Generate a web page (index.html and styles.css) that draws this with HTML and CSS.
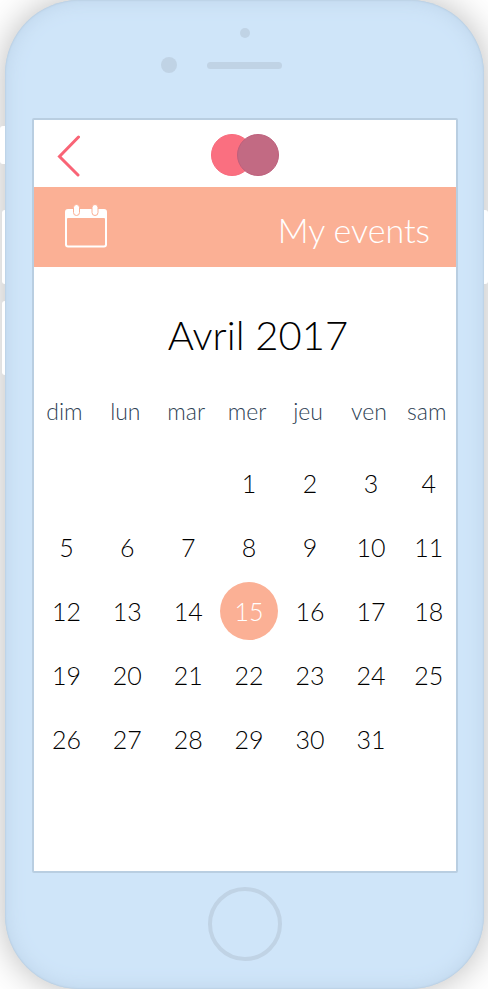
FILE: index.html
```html
<!DOCTYPE html>
<html lang="fr">
<head>
<meta charset="utf-8">
<meta name="viewport" content="width=device-width, initial-scale=1">
<title>My events</title>
<link rel="stylesheet" href="styles.css">
</head>
<body>
<div class="phone">
  <span class="key key-mute"></span>
  <span class="key key-up"></span>
  <span class="key key-down"></span>
  <span class="key key-power"></span>
  <div class="forehead">
    <span class="sensor"></span>
    <div class="ear">
      <span class="camera"></span>
      <span class="speaker"></span>
    </div>
  </div>
  <div class="screen">
    <header class="topbar">
      <a class="back" href="#" aria-label="Back">
        <svg width="24" height="42" viewBox="0 0 24 42" fill="none" stroke="#f96476" stroke-width="3" stroke-linecap="round" stroke-linejoin="miter"><path d="M22.500 2 3.500 21.500 22 40"/></svg>
      </a>
      <svg class="logo" width="70" height="43" viewBox="0 0 70 43">
        <circle cx="22" cy="21" r="20.500" fill="#fa6f80" stroke="#f86a7c"/>
        <circle cx="48" cy="21" r="20.500" fill="#c26a83" stroke="#bd607c"/>
      </svg>
    </header>
    <div class="banner">
      <svg width="44" height="46" viewBox="0 0 44 46">
        <path fill="#fff" fill-rule="evenodd" d="M3 5h36a3 3 0 0 1 3 3v32.500a3 3 0 0 1-3 3H3a3 3 0 0 1-3-3V8a3 3 0 0 1 3-3zM3 14a1 1 0 0 0-1 1v25.500a1 1 0 0 0 1 1h36a1 1 0 0 0 1-1V15a1 1 0 0 0-1-1z"/>
        <g fill="#fff" stroke="#fbb095">
          <rect x="8.500" y=".5" width="6" height="11" rx="3"/>
          <rect x="27" y=".5" width="6" height="11" rx="3"/>
        </g>
      </svg>
      <h1 class="title">My events</h1>
    </div>
    <main class="calendar">
      <h2 class="month">Avril 2017</h2>
      <table class="days">
        <colgroup><col span="6"><col class="last"></colgroup>
        <thead>
          <tr><th>dim</th><th>lun</th><th>mar</th><th>mer</th><th>jeu</th><th>ven</th><th>sam</th></tr>
        </thead>
        <tbody>
          <tr><td></td><td></td><td></td><td><button>1</button></td><td><button>2</button></td><td><button>3</button></td><td><button>4</button></td></tr>
          <tr><td><button>5</button></td><td><button>6</button></td><td><button>7</button></td><td><button>8</button></td><td><button>9</button></td><td><button>10</button></td><td><button>11</button></td></tr>
          <tr><td><button>12</button></td><td><button>13</button></td><td><button>14</button></td><td><button class="selected">15</button></td><td><button>16</button></td><td><button>17</button></td><td><button>18</button></td></tr>
          <tr><td><button>19</button></td><td><button>20</button></td><td><button>21</button></td><td><button>22</button></td><td><button>23</button></td><td><button>24</button></td><td><button>25</button></td></tr>
          <tr><td><button>26</button></td><td><button>27</button></td><td><button>28</button></td><td><button>29</button></td><td><button>30</button></td><td><button>31</button></td><td></td></tr>
        </tbody>
      </table>
    </main>
  </div>
  <div class="chin"><button class="home" aria-label="Home"></button></div>
</div>
</body>
</html>
```
FILE: styles.css
```css
* {
  box-sizing: border-box;
}

body {
  margin: 0;
  padding: 0 4px 0 5px;
  background: #fff;
  font-family: Lato, "Open Sans", sans-serif;
  font-weight: 300;
  overflow-x: hidden;
}

button {
  margin: 0;
  padding: 0;
  border: 0;
  background: none;
  font: inherit;
  color: inherit;
}

.phone {
  position: relative;
  display: flex;
  flex-direction: column;
  min-height: 100vh;
  border-radius: 74px;
  background: #cfe5f9;
  box-shadow: 0 0 36px rgba(0, 0, 0, 0.28), inset 0 0 2px #a9bfd2, inset 0 0 20px #bdd3e8;
}

.key {
  position: absolute;
  right: 100%;
  width: 3px;
  height: 74px;
  border-radius: 3px 0 0 3px;
  background: #fff;
}

.key-mute {
  top: 126px;
  width: 5px;
  height: 38px;
}

.key-up {
  top: 210px;
}

.key-down {
  top: 301px;
}

.key-power {
  top: 210px;
  right: auto;
  left: 100%;
  width: 4px;
  border-radius: 0 3px 3px 0;
}

.forehead {
  display: flex;
  flex-direction: column;
  align-items: center;
  gap: 19px;
  height: 118px;
  padding-top: 28px;
}

.sensor {
  width: 10px;
  height: 10px;
  border-radius: 50%;
  background: #c0d3e5;
}

.ear {
  display: grid;
  grid-template-columns: 1fr 75px 1fr;
  align-items: center;
  column-gap: 30px;
  width: 100%;
}

.camera {
  justify-self: end;
  width: 16px;
  height: 16px;
  border-radius: 50%;
  background: #c0d3e5;
}

.speaker {
  height: 7px;
  border-radius: 4px;
  background: #c0d3e5;
}

.screen {
  flex: 1;
  margin: 0 26px 0 27px;
  border: 2px solid #b9cee1;
  border-radius: 2px;
  background: #fff;
}

.topbar {
  display: grid;
  grid-template-columns: 1fr auto 1fr;
  align-items: center;
  height: 67px;
  padding: 4px 22px 0;
}

.back,
.back svg,
.logo {
  display: block;
}

.back {
  justify-self: start;
}

.banner {
  display: flex;
  align-items: center;
  justify-content: space-between;
  height: 80px;
  padding: 0 26px 0 31px;
  background: #fbb095;
}

.title {
  margin: 0;
  padding-top: 6px;
  font-size: 34px;
  line-height: 44px;
  font-weight: 300;
  color: #fff;
}

.calendar {
  padding: 42px 0 16px 2px;
}

.month {
  margin: 0 0 36px 24px;
  font-size: 40px;
  line-height: 52px;
  font-weight: 300;
  text-align: center;
  color: #000;
}

.days {
  width: 100%;
  table-layout: fixed;
  border-collapse: collapse;
  text-align: center;
}

.last {
  width: 13%;
}

th {
  height: 54px;
  padding: 0 4px 26px 0;
  font-size: 23px;
  line-height: 28px;
  font-weight: 300;
  color: #2e4254;
}

td {
  height: 64px;
  padding: 0;
  font-size: 25px;
  color: #000;
}

td button {
  width: 58px;
  height: 58px;
  border-radius: 50%;
}

td:last-child button {
  width: 100%;
}

.selected {
  background: #fbb095;
  color: #fff;
}

.chin {
  display: flex;
  justify-content: center;
  height: 116px;
  padding-top: 14px;
}

.home {
  width: 74px;
  height: 74px;
  border: 4px solid #c0d3e5;
  border-radius: 50%;
}
```
